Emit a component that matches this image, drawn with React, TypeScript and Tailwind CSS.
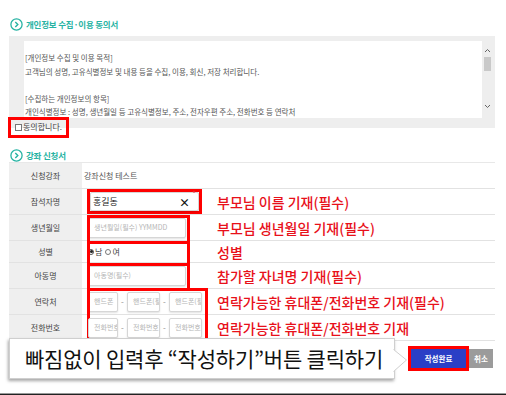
import React from 'react';

const font = { fontFamily: '"Noto Sans CJK KR", "Noto Sans", sans-serif' };

const CircleIcon = () => (
  <svg width="13" height="13" viewBox="0 0 13 13" className="shrink-0">
    <circle cx="6.5" cy="6.5" r="5.6" fill="none" stroke="#27b3a3" strokeWidth="1.3" />
    <path d="M5.3 4 L7.8 6.5 L5.3 9" fill="none" stroke="#27b3a3" strokeWidth="1.4" />
  </svg>
);

const SectionTitle = ({ title }: { title: string }) => (
  <div className="flex h-[14px] items-center gap-[3px] pl-[1px]">
    <CircleIcon />
    <span className="text-[8.5px] font-bold tracking-[-0.2px] text-[#27b3a3]">{title}</span>
  </div>
);

const Star = () => (
  <span className="absolute right-[2px] top-[-3px] text-[8px] leading-none text-[#e8323c]">*</span>
);

const Field = ({ w, text, star }: { w: string; text: string; star?: boolean }) => (
  <div
    className={`relative flex h-[20px] items-center overflow-hidden whitespace-nowrap rounded-[2px] border border-[#d6d6d6] bg-white pl-[5px] shadow-[0_1px_2px_rgba(0,0,0,0.12)] ${w}`}
  >
    <span className="text-[7px] text-[#b5b5b5]">{text}</span>
    {star && <Star />}
  </div>
);

const Note = ({ children }: { children: React.ReactNode }) => (
  <span className="whitespace-nowrap text-[14px] font-medium leading-none text-[#e8101a]">{children}</span>
);

const Row = ({
  label,
  h = 'h-[26px]',
  children,
}: {
  label: string;
  h?: string;
  children: React.ReactNode;
}) => (
  <div className={`flex border-b border-[#e2e2e2] ${h}`}>
    <div className="flex w-[73px] shrink-0 items-center justify-center bg-[#efefef] text-[8px] text-[#444]">
      {label}
    </div>
    <div className="relative flex flex-1 items-center">{children}</div>
  </div>
);

const Frame = ({ cls }: { cls: string }) => (
  <div className={`pointer-events-none absolute border-[3px] border-[#ff0000] ${cls}`} />
);

const Dash = () => <span className="w-[9px] text-center text-[8px] text-[#888]">-</span>;

export default function App() {
  return (
    <div className="h-[395px] w-[506px] overflow-hidden bg-white" style={font}>
      <div className="w-[495px] pl-[9px] pt-[17px]">
        <SectionTitle title="개인정보 수집·이용 동의서" />

        <div className="relative mt-[5px] h-[92px] bg-[#eeeeee] pl-[15px] pr-[3px] pt-[5px]">
          <div className="flex h-[77px]">
            <div className="flex-1 overflow-hidden bg-white pl-[1px] pt-[10px] text-[7.5px] leading-[13.5px] text-[#555]">
              <div>[개인정보 수집 및 이용 목적]</div>
              <div>고객님의 성명, 고유식별정보 및 내용 등을 수집, 이용, 회신, 저장 처리합니다.</div>
              <div>&nbsp;</div>
              <div>[수집하는 개인정보의 항목]</div>
              <div className="whitespace-nowrap">
                개인식별정보 : 성명, 생년월일 등 고유식별정보, 주소, 전자우편 주소, 전화번호 등 연락처
              </div>
            </div>
            <div className="flex w-[10px] flex-col items-center pt-[7px]">
              <svg width="7" height="5" viewBox="0 0 7 5">
                <path d="M1 4 L3.5 1.5 L6 4" fill="none" stroke="#666" strokeWidth="1" />
              </svg>
              <div className="mt-[4px] h-[14px] w-[7px] bg-[#c9c9c9]" />
              <div className="flex-1" />
              <svg width="7" height="5" viewBox="0 0 7 5" className="mb-[9px]">
                <path d="M1 1 L3.5 3.5 L6 1" fill="none" stroke="#666" strokeWidth="1" />
              </svg>
            </div>
          </div>
          <div className="-ml-[9px] mt-[4px] flex h-[10px] items-center gap-[1px] text-[8px] text-[#444]">
            <span className="inline-block h-[7px] w-[7px] border border-[#777] bg-white" />
            <span>동의합니다.</span>
          </div>
          <Frame cls="left-[-1px] top-[81px] h-[21px] w-[61px]" />
        </div>

        <div className="mt-[20px]">
          <SectionTitle title="강좌 신청서" />
        </div>

        <div className="border-t border-[#e8e8e8]">
          <Row label="신청강좌">
            <span className="pl-[2px] text-[8px] text-[#555]">강좌신청 테스트</span>
          </Row>
          <Row label="참석자명">
            <div className="w-[135px] shrink-0 pl-[5px]">
              <div className="h-[25px] w-[115px] border-[3px] border-[#ff0000]">
                <div className="relative flex h-full items-center rounded-[2px] border border-[#d6d6d6] bg-white pl-[2px] shadow-[0_1px_2px_rgba(0,0,0,0.15)]">
                  <span className="text-[9px] text-[#222]">홍길동</span>
                  <span className="absolute right-[8px] top-[2px] text-[11px] font-bold leading-[14px] text-[#111]">×</span>
                  <Star />
                </div>
              </div>
            </div>
            <Note>부모님 이름 기재(필수)</Note>
          </Row>
          <Row label="생년월일">
            <div className="w-[135px] shrink-0 pl-[6px]">
              <Field w="w-[98px]" text="생년월일(필수) YYMMDD" star />
            </div>
            <Note>부모님 생년월일 기재(필수)</Note>
            <Frame cls="left-[5px] top-0 -bottom-[4px] w-[103px]" />
          </Row>
          <Row label="성별" h="h-[22px]">
            <div className="flex w-[135px] shrink-0 items-center pl-[6px] text-[8px] text-[#444]">
              <span className="mr-[1px] inline-flex h-[6px] w-[6px] items-center justify-center rounded-full border border-[#555]">
                <span className="h-[3px] w-[3px] rounded-full bg-[#222]" />
              </span>
              <span>남</span>
              <span className="ml-[3px] mr-[1px] inline-block h-[6px] w-[6px] rounded-full border border-[#777]" />
              <span>여</span>
            </div>
            <Note>성별</Note>
            <Frame cls="left-[5px] top-0 -bottom-[4px] w-[103px]" />
          </Row>
          <Row label="아동명">
            <div className="w-[135px] shrink-0 pl-[6px]">
              <Field w="w-[98px]" text="아동명(필수)" star />
            </div>
            <Note>참가할 자녀명 기재(필수)</Note>
            <Frame cls="left-[5px] top-0 -bottom-[3px] w-[103px]" />
          </Row>
          <Row label="연락처">
            <div className="flex w-[135px] shrink-0 items-center pl-[6px]">
              <Field w="w-[30px]" text="핸드폰" star />
              <Dash />
              <Field w="w-[33px]" text="핸드폰(필수)" star />
              <Dash />
              <Field w="w-[33px]" text="핸드폰(필수)" star />
            </div>
            <Note>연락가능한 휴대폰/전화번호 기재(필수)</Note>
            <Frame cls="left-[5px] top-[-1px] h-[56px] w-[121px]" />
          </Row>
          <Row label="전화번호">
            <div className="flex w-[135px] shrink-0 items-center pl-[6px]">
              <Field w="w-[30px]" text="전화번호" />
              <Dash />
              <Field w="w-[33px]" text="전화번호" />
              <Dash />
              <Field w="w-[33px]" text="전화번호" />
            </div>
            <Note>연락가능한 휴대폰/전화번호 기재</Note>
          </Row>
        </div>

        <div className="relative z-10 -mt-[3px] flex items-center">
          <div className="relative flex h-[41px] w-[386px] items-center border border-[#cfcfcf] bg-white pl-[15px] shadow-[-1px_2px_3px_rgba(0,0,0,0.35)]">
            <span className="whitespace-nowrap text-[21px] leading-none tracking-[-0.2px] text-[#111]">
              빠짐없이 입력후 “작성하기”버튼 클릭하기
            </span>
            <svg width="15" height="24" viewBox="0 0 15 24" className="absolute right-[-14px] top-[10px]">
              <path d="M0.5 0.5 L13.5 11 L0.5 22.5" fill="white" stroke="#cfcfcf" strokeWidth="1" />
              <rect x="0" y="1.5" width="1.2" height="20" fill="white" />
            </svg>
          </div>
          <div className="ml-[13px] flex items-center">
            <div className="flex h-[25px] w-[61px] items-center justify-center border-[3px] border-[#ff0000] bg-white">
              <div className="flex h-full w-full items-center justify-center bg-[#2a3fc6] text-[7.5px] font-bold text-white">
                작성완료
              </div>
            </div>
            <div className="flex h-[19px] w-[24px] items-center justify-center bg-[#9b9b9b] text-[7.5px] font-bold text-white">
              취소
            </div>
          </div>
        </div>
      </div>
      <div className="mt-[14px] h-[1px] w-full bg-[#999]" />
      <div className="h-[3px] w-full bg-[#222]" />
    </div>
  );
}
